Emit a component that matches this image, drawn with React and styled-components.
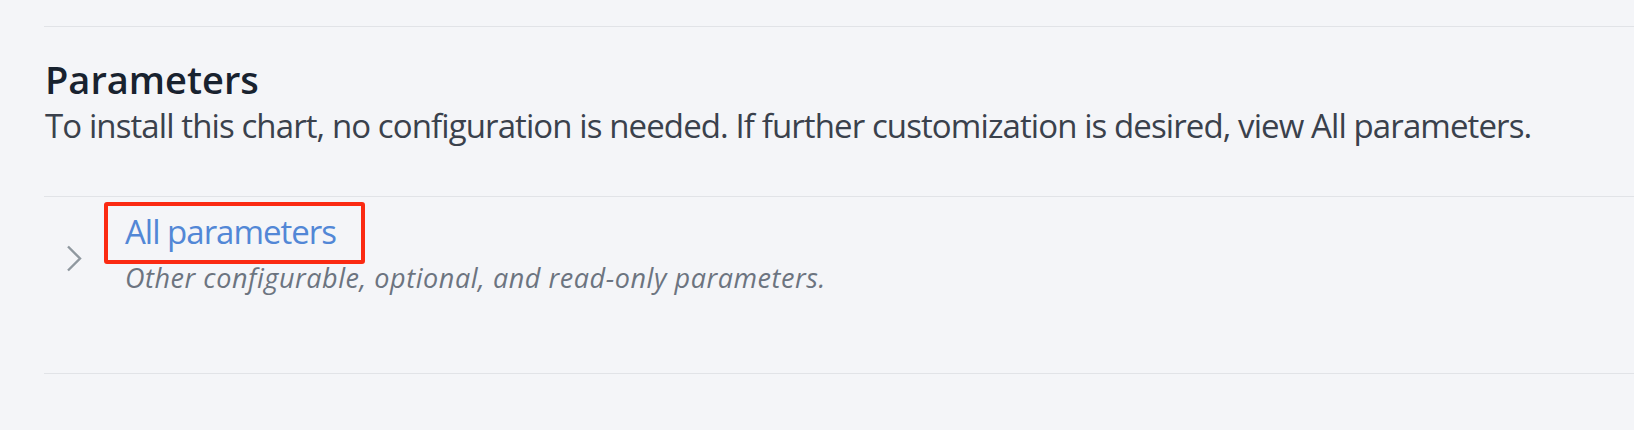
import React from 'react';
import styled, { createGlobalStyle } from 'styled-components';

const GlobalStyle = createGlobalStyle`
  html, body {
    margin: 0;
    background: #f4f5f8;
  }
  body {
    font-family: "Open Sans", "Noto Sans", sans-serif;
  }
`;

const Page = styled.div`
  min-height: 430px;
  padding: 26px 0 0 44px;
  box-sizing: border-box;
  background: #f4f5f8;
`;

const Section = styled.section`
  border-top: 1px solid #e1e3e7;
`;

const Header = styled.header`
  padding: 30px 0 48px 1px;
`;

const Title = styled.h2`
  margin: 0;
  font-size: 38px;
  line-height: 44px;
  font-weight: 600;
  font-stretch: 92%;
  color: #18222f;
`;

const Description = styled.p`
  margin: 3px 0 0;
  font-size: 33px;
  line-height: 44px;
  font-weight: 400;
  font-stretch: 89%;
  letter-spacing: -0.9px;
  color: #3a414c;
  white-space: nowrap;
`;

const Item = styled.div`
  display: grid;
  grid-template-columns: 81px 1fr;
  border-top: 1px solid #e1e3e7;
  border-bottom: 1px solid #e1e3e7;
  padding: 13px 0 78px;
`;

const Chevron = styled.svg`
  width: 16px;
  height: 27px;
  margin: 35px 0 0 22px;
  color: #8f989f;
`;

const ItemBody = styled.div`
  display: flex;
  flex-direction: column;
  align-items: flex-start;
`;

const ItemTitle = styled.span`
  position: relative;
  display: inline-block;
  font-size: 33px;
  line-height: 44px;
  font-stretch: 91%;
  letter-spacing: -1px;
  color: #5287d6;

  &::after {
    content: '';
    position: absolute;
    top: -8px;
    bottom: -10px;
    left: -21px;
    right: -29px;
    border: 4px solid #fb2a12;
    border-radius: 3px;
  }
`;

const ItemNote = styled.span`
  margin-top: 7px;
  font-size: 27px;
  line-height: 34px;
  font-style: italic;
  letter-spacing: 0.55px;
  color: #6c7480;
`;

export default function App() {
  return (
    <>
      <GlobalStyle />
      <Page>
        <Section>
          <Header>
            <Title>Parameters</Title>
            <Description>
              To install this chart, no configuration is needed. If further customization is desired, view All parameters.
            </Description>
          </Header>
          <Item>
            <Chevron viewBox="0 0 16 27" fill="none">
              <path d="M2 1.5 L14 13.5 L2 25.5" stroke="currentColor" strokeWidth="2.4" />
            </Chevron>
            <ItemBody>
              <ItemTitle>All parameters</ItemTitle>
              <ItemNote>Other configurable, optional, and read-only parameters.</ItemNote>
            </ItemBody>
          </Item>
        </Section>
      </Page>
    </>
  );
}
